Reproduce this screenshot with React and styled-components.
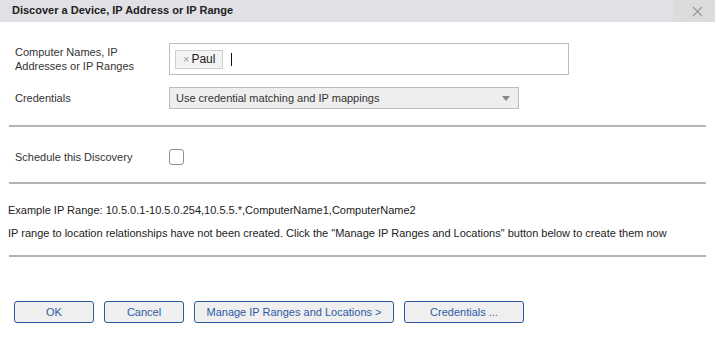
import styled, { createGlobalStyle } from 'styled-components'

const GlobalStyle = createGlobalStyle`
  html, body {
    margin: 0;
    padding: 0;
    background: #fff;
    font-family: 'Liberation Sans', Arial, sans-serif;
    font-size: 11px;
    color: #333;
  }
`

const buttons = ['OK', 'Cancel', 'Manage IP Ranges and Locations >', 'Credentials ...']
const buttonWidths = [80, 80, 200, 120]

const App = () => {
  return (
    <Dialog>
      <GlobalStyle />
      <Header>
        <Title>Discover a Device, IP Address or IP Range</Title>
        <CloseButton aria-label="close">
          <svg width="11" height="11" viewBox="0 0 11 11">
            <path d="M1 1L10 10M10 1L1 10" stroke="#9a9a9a" strokeWidth="1.3" />
          </svg>
        </CloseButton>
      </Header>

      <Body>
        <FieldRow $top={21}>
          <Label>
            Computer Names, IP
            <br />
            Addresses or IP Ranges
          </Label>
          <TagInput>
            <Tag>
              <TagRemove>×</TagRemove>Paul
            </Tag>
            <Caret />
          </TagInput>
        </FieldRow>

        <FieldRow $top={12}>
          <Label>Credentials</Label>
          <Select>
            Use credential matching and IP mappings
            <Arrow />
          </Select>
        </FieldRow>

        <Divider $top={16} />

        <FieldRow $top={22}>
          <Label>Schedule this Discovery</Label>
          <Checkbox />
        </FieldRow>

        <Divider $top={17} />

        <Note $top={20}>Example IP Range: 10.5.0.1-10.5.0.254,10.5.5.*,ComputerName1,ComputerName2</Note>
        <Note $top={10}>
          IP range to location relationships have not been created. Click the "Manage IP Ranges and
          Locations" button below to create them now
        </Note>

        <Divider $top={15} />

        <ButtonBar>
          {buttons.map((label, index) => (
            <Button key={label} $width={buttonWidths[index]}>
              {label}
            </Button>
          ))}
        </ButtonBar>
      </Body>
    </Dialog>
  )
}

export default App

const Dialog = styled.div`
  width: 715px;
  height: 353px;
  background: #fff;
  overflow: hidden;
`

const Header = styled.div`
  height: 22px;
  background: #e1e0e5;
  display: flex;
  align-items: stretch;
`

const Title = styled.div`
  flex: 1;
  padding-left: 12px;
  font-weight: 700;
  font-size: 11px;
  line-height: 21px;
  color: #222;
`

const CloseButton = styled.div`
  width: 42px;
  background: #dcdcdc;
  display: flex;
  align-items: center;
  justify-content: center;
  padding-left: 6px;
  box-sizing: border-box;
`

const Body = styled.div`
  display: flex;
  flex-direction: column;
`

const FieldRow = styled.div`
  display: flex;
  align-items: center;
  margin-top: ${(p) => p.$top}px;
  padding-left: 15px;
`

const Label = styled.div`
  width: 154px;
  line-height: 14px;
  color: #333;
`

const TagInput = styled.div`
  width: 400px;
  height: 32px;
  box-sizing: border-box;
  border: 1px solid #bdbdbd;
  display: flex;
  align-items: center;
  padding-left: 5px;
  gap: 8px;
`

const Tag = styled.span`
  display: inline-flex;
  align-items: center;
  height: 19px;
  width: 48px;
  box-sizing: border-box;
  padding: 0 0 0 7px;
  background: #f3f3f3;
  border: 1px solid #cfcfcf;
  font-size: 12px;
  color: #222;
`

const TagRemove = styled.span`
  color: #999;
  font-size: 11px;
  margin-right: 2px;
`

const Caret = styled.span`
  width: 1px;
  height: 13px;
  background: #111;
`

const Select = styled.div`
  position: relative;
  width: 350px;
  height: 22px;
  box-sizing: border-box;
  border: 1px solid #bdbdbd;
  background: #eeeeee;
  padding-left: 6px;
  line-height: 20px;
  color: #333;
`

const Arrow = styled.span`
  position: absolute;
  right: 8px;
  top: 8px;
  width: 0;
  height: 0;
  border-left: 4px solid transparent;
  border-right: 4px solid transparent;
  border-top: 5px solid #888;
`

const Checkbox = styled.span`
  width: 13px;
  height: 14px;
  border: 1px solid #8f8f8f;
  border-radius: 3px;
  background: #fff;
`

const Divider = styled.hr`
  margin: ${(p) => p.$top}px 9px 0;
  border: none;
  border-top: 2px solid #b4b4b4;
  height: 0;
`

const Note = styled.div`
  margin-top: ${(p) => p.$top}px;
  padding-left: 8px;
  line-height: 13px;
  color: #222;
`

const ButtonBar = styled.div`
  display: flex;
  gap: 10px;
  margin-top: 44px;
  padding-left: 14px;
`

const Button = styled.button`
  width: ${(p) => p.$width}px;
  height: 22px;
  box-sizing: border-box;
  border: 1px solid #2b58a0;
  border-radius: 3px;
  background: #efefef;
  color: #2d5aa6;
  font-family: 'Liberation Sans', Arial, sans-serif;
  font-size: 11px;
  padding: 0;
  cursor: pointer;
`
